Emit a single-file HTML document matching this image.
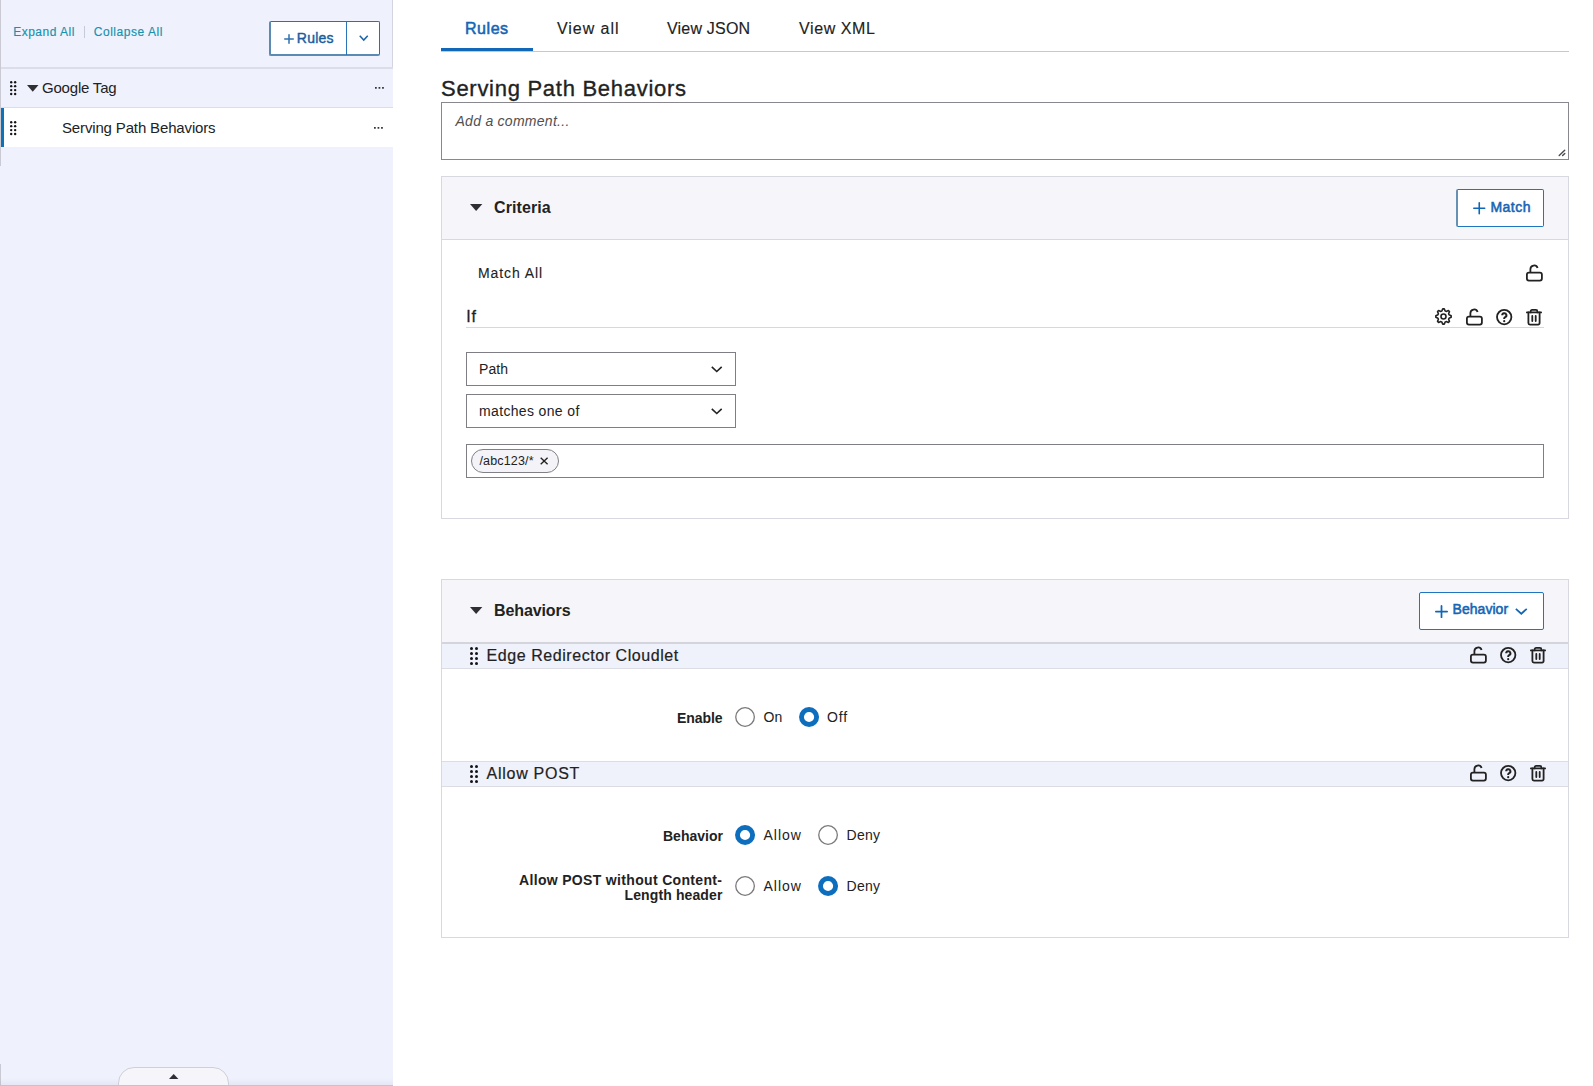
<!DOCTYPE html>
<html><head><meta charset="utf-8">
<style>
*{box-sizing:border-box;margin:0;padding:0}
html,body{width:1594px;height:1086px;overflow:hidden;background:#fff;font-family:"Liberation Sans",sans-serif;color:#222}
.a{position:absolute}
.t{position:absolute;white-space:nowrap;line-height:1}
svg{position:absolute;overflow:visible}
</style></head><body>
<div class="a" style="left:0px;top:0px;width:393px;height:1086px;background:#eff1fd;"></div>
<div class="a" style="left:0px;top:0px;width:1px;height:166px;background:#c9cad3;"></div>
<div class="a" style="left:0px;top:1064px;width:1px;height:22px;background:#c9cad3;"></div>
<div class="a" style="left:392px;top:0px;width:1px;height:68px;background:#d3d4dd;"></div>
<div class="t" style="left:13.20px;top:26.04px;font-size:12px;font-weight:normal;color:#1592ad;letter-spacing:0.5px;font-style:normal;-webkit-text-stroke:0.15px #1592ad">Expand All</div>
<div class="a" style="left:84px;top:26px;width:1px;height:12px;background:#c6c9d6;"></div>
<div class="t" style="left:93.70px;top:26.04px;font-size:12px;font-weight:normal;color:#1592ad;letter-spacing:0.55px;font-style:normal;-webkit-text-stroke:0.15px #1592ad">Collapse All</div>
<div class="a" style="left:268.5px;top:21px;width:111px;height:35px;background:#fff;border-radius:2px;border-top:1.3px solid #1f72bb;border-right:1.3px solid #1f72bb;border-left:2px solid #5b8ab3;border-bottom:2px solid #5b8ab3;"></div>
<div class="a" style="left:346px;top:22px;width:1.3px;height:33px;background:#2a74b8;"></div>
<svg style="left:284px;top:34.2px;" width="10" height="10" viewBox="0 0 10 10"><path d="M5.0 0.75V9.25M0.75 5.0H9.25" stroke="#2f72b0" stroke-width="1.5" stroke-linecap="round"/></svg>
<div class="t" style="left:296.80px;top:30.65px;font-size:14px;font-weight:normal;color:#1a5d9f;letter-spacing:0.25px;font-style:normal;-webkit-text-stroke:0.42px #1a5d9f">Rules</div>
<svg style="left:358.5px;top:35px;" width="9.5" height="5.8" viewBox="0 0 9.5 5.8"><path d="M0.75 0.75L4.75 5.05L8.75 0.75" fill="none" stroke="#1a65a8" stroke-width="1.5"/></svg>
<div class="a" style="left:1px;top:67px;width:392px;height:2px;background:#dcdde8;"></div>
<svg style="left:10.3px;top:80.8px;" width="6.35" height="14.250000000000002" viewBox="0 0 6.35 14.250000000000002"><g fill="#141418"><circle cx="1.20" cy="1.20" r="1.2"/><circle cx="5.15" cy="1.20" r="1.2"/><circle cx="1.20" cy="5.15" r="1.2"/><circle cx="5.15" cy="5.15" r="1.2"/><circle cx="1.20" cy="9.10" r="1.2"/><circle cx="5.15" cy="9.10" r="1.2"/><circle cx="1.20" cy="13.05" r="1.2"/><circle cx="5.15" cy="13.05" r="1.2"/></g></svg>
<svg style="left:26.8px;top:84.8px;" width="11.5" height="6.8" viewBox="0 0 11.5 6.8"><path d="M0 0H11.5L5.75 6.8Z" fill="#2e2e33"/></svg>
<div class="t" style="left:42.00px;top:80.00px;font-size:15px;font-weight:normal;color:#222;letter-spacing:-0.2px;font-style:normal;">Google Tag</div>
<svg style="left:374.7px;top:87px;" width="9.2" height="2.1" viewBox="0 0 9.2 2.1"><g fill="#34343a"><rect x="0" y="0" width="1.75" height="1.75"/><rect x="3.55" y="0" width="1.75" height="1.75"/><rect x="7.1" y="0" width="1.75" height="1.75"/></g></svg>
<div class="a" style="left:1px;top:107px;width:392px;height:1px;background:#dcdde8;"></div>
<div class="a" style="left:4px;top:108px;width:389px;height:39px;background:#fff;"></div>
<div class="a" style="left:1px;top:108px;width:3px;height:39px;background:#0f72b5;"></div>
<svg style="left:10.3px;top:120.8px;" width="6.35" height="14.250000000000002" viewBox="0 0 6.35 14.250000000000002"><g fill="#141418"><circle cx="1.20" cy="1.20" r="1.2"/><circle cx="5.15" cy="1.20" r="1.2"/><circle cx="1.20" cy="5.15" r="1.2"/><circle cx="5.15" cy="5.15" r="1.2"/><circle cx="1.20" cy="9.10" r="1.2"/><circle cx="5.15" cy="9.10" r="1.2"/><circle cx="1.20" cy="13.05" r="1.2"/><circle cx="5.15" cy="13.05" r="1.2"/></g></svg>
<div class="t" style="left:62.00px;top:120.00px;font-size:15px;font-weight:normal;color:#222;letter-spacing:-0.15px;font-style:normal;">Serving Path Behaviors</div>
<svg style="left:373.8px;top:127px;" width="9.2" height="2.1" viewBox="0 0 9.2 2.1"><g fill="#34343a"><rect x="0" y="0" width="1.75" height="1.75"/><rect x="3.55" y="0" width="1.75" height="1.75"/><rect x="7.1" y="0" width="1.75" height="1.75"/></g></svg>
<div class="a" style="left:0px;top:1078px;width:393px;height:7px;background:linear-gradient(rgba(0,0,0,0),rgba(40,40,80,0.05));"></div>
<div class="a" style="left:118px;top:1067px;width:111px;height:25px;background:#f5f5fa;border:1.3px solid #cfcfd7;border-radius:16px 16px 0 0;"></div>
<div class="a" style="left:0px;top:1085px;width:393px;height:1px;background:#c4c4cc;"></div>
<svg style="left:168.7px;top:1073.9px;" width="9.4" height="4.9" viewBox="0 0 9.4 4.9"><path d="M0 4.9H9.4L4.7 0Z" fill="#2e2e33"/></svg>
<div class="a" style="left:1593px;top:0px;width:1px;height:1086px;background:#d0d0d4;"></div>
<div class="t" style="left:465.00px;top:21.06px;font-size:16px;font-weight:normal;color:#1565b4;letter-spacing:0.55px;font-style:normal;-webkit-text-stroke:0.55px #1565b4">Rules</div>
<div class="t" style="left:557.00px;top:21.06px;font-size:16px;font-weight:normal;color:#222;letter-spacing:0.95px;font-style:normal;-webkit-text-stroke:0.15px #222">View all</div>
<div class="t" style="left:667.00px;top:21.06px;font-size:16px;font-weight:normal;color:#222;letter-spacing:0.2px;font-style:normal;-webkit-text-stroke:0.15px #222">View JSON</div>
<div class="t" style="left:799.00px;top:21.06px;font-size:16px;font-weight:normal;color:#222;letter-spacing:0.6px;font-style:normal;-webkit-text-stroke:0.15px #222">View XML</div>
<div class="a" style="left:441px;top:51px;width:1128px;height:1px;background:#c8c8c8;"></div>
<div class="a" style="left:441px;top:48px;width:92px;height:3px;background:#1268b8;"></div>
<div class="t" style="left:441.00px;top:78.38px;font-size:22px;font-weight:normal;color:#222;letter-spacing:0.72px;font-style:normal;-webkit-text-stroke:0.35px #222">Serving Path Behaviors</div>
<div class="a" style="left:441px;top:102px;width:1128px;height:58px;background:#fff;border:1.2px solid #88888e;"></div>
<div class="t" style="left:455.50px;top:113.75px;font-size:14px;font-weight:normal;color:#505050;letter-spacing:0.27px;font-style:italic;">Add a comment...</div>
<svg style="left:1558px;top:149px;" width="8" height="8" viewBox="0 0 8 8"><path d="M1.2 6.6L6.7 1.3M4.6 6.6L6.8 4.4" stroke="#4a4a50" stroke-width="1.4" stroke-linecap="round"/></svg>
<div class="a" style="left:441px;top:176px;width:1128px;height:343px;background:#fff;border:1px solid #d8d8e0;"></div>
<div class="a" style="left:442px;top:177px;width:1126px;height:62px;background:#f6f6fa;"></div>
<div class="a" style="left:442px;top:239px;width:1126px;height:1px;background:#d8d8e0;"></div>
<svg style="left:470px;top:204px;" width="12.3" height="7" viewBox="0 0 12.3 7"><path d="M0 0H12.3L6.15 7Z" fill="#2e2e33"/></svg>
<div class="t" style="left:494.00px;top:199.56px;font-size:16px;font-weight:bold;color:#222;letter-spacing:0.1px;font-style:normal;">Criteria</div>
<div class="a" style="left:1456.3px;top:189px;width:87.7px;height:38px;background:#fff;border-radius:2px;border-top:1.3px solid #1f75c0;border-right:1.3px solid #1f75c0;border-bottom:1.3px solid #1f75c0;border-left:2px solid #6790b5;"></div>
<svg style="left:1473.2px;top:201.8px;" width="12.5" height="12.5" viewBox="0 0 12.5 12.5"><path d="M6.25 0.8V11.7M0.8 6.25H11.7" stroke="#0f66b8" stroke-width="1.6" stroke-linecap="round"/></svg>
<div class="t" style="left:1490.50px;top:199.55px;font-size:14px;font-weight:normal;color:#1565b4;letter-spacing:0.45px;font-style:normal;-webkit-text-stroke:0.55px #1565b4">Match</div>
<div class="t" style="left:478.00px;top:266.15px;font-size:14px;font-weight:normal;color:#222;letter-spacing:0.9px;font-style:normal;-webkit-text-stroke:0.1px #222">Match All</div>
<svg style="left:1525.5px;top:264.5px;" width="17" height="17" viewBox="0 0 17 17"><g fill="none" stroke="#222" stroke-width="1.8"><rect x="0.9" y="7.6" width="15" height="8" rx="2"/><path d="M4.4 7.6V4.3a3.7 3.7 0 0 1 7.2-1.3"/></g></svg>
<div class="t" style="left:466.30px;top:308.76px;font-size:16px;font-weight:normal;color:#222;letter-spacing:0.8px;font-style:normal;-webkit-text-stroke:0.3px #222">If</div>
<div class="a" style="left:466px;top:327px;width:1078px;height:1px;background:#d8d8d8;"></div>
<svg style="left:1435px;top:308.2px;" width="18" height="18" viewBox="0 0 18 18"><g fill="none" stroke="#222" stroke-width="1.6" stroke-linejoin="round"><path d="M16.16 7.75 L16.16 9.25 L14.05 10.18 L13.62 11.23 L14.45 13.38 L13.38 14.45 L11.23 13.62 L10.18 14.05 L9.25 16.16 L7.75 16.16 L6.82 14.05 L5.77 13.62 L3.62 14.45 L2.55 13.38 L3.38 11.23 L2.95 10.18 L0.84 9.25 L0.84 7.75 L2.95 6.82 L3.38 5.77 L2.55 3.62 L3.62 2.55 L5.77 3.38 L6.82 2.95 L7.75 0.84 L9.25 0.84 L10.18 2.95 L11.23 3.38 L13.38 2.55 L14.45 3.62 L13.62 5.77 L14.05 6.82Z"/><circle cx="8.5" cy="8.5" r="2.5"/></g></svg>
<svg style="left:1465.5px;top:308.5px;" width="17" height="17" viewBox="0 0 17 17"><g fill="none" stroke="#222" stroke-width="1.8"><rect x="0.9" y="7.6" width="15" height="8" rx="2"/><path d="M4.4 7.6V4.3a3.7 3.7 0 0 1 7.2-1.3"/></g></svg>
<svg style="left:1495.5px;top:308.5px;" width="17" height="17" viewBox="0 0 17 17"><g fill="none" stroke="#222" stroke-width="1.8"><circle cx="8.2" cy="8.1" r="7.2"/><path d="M6.2 6.3a2.1 2.1 0 1 1 2.9 1.9c-.55.25-.9.6-.9 1.3v.4" stroke-width="2"/></g><circle cx="8.2" cy="12.2" r="1.1" fill="#222"/></svg>
<svg style="left:1525.5px;top:308.5px;" width="17" height="17" viewBox="0 0 17 17"><g fill="none" stroke="#222" stroke-width="1.8" stroke-linejoin="round" stroke-linecap="round"><path d="M0.9 3.4H15.1"/><path d="M4.6 3.4V2.4a1.5 1.5 0 0 1 1.5-1.5H9.9a1.5 1.5 0 0 1 1.5 1.5V3.4"/><path d="M2.4 3.4V14.1a1.5 1.5 0 0 0 1.5 1.5H12.1a1.5 1.5 0 0 0 1.5-1.5V3.4"/><path d="M6.3 7V12M9.7 7V12"/></g></svg>
<div class="a" style="left:466px;top:352px;width:270px;height:34px;background:#fff;border:1.2px solid #7e7e84;"></div>
<div class="t" style="left:479.00px;top:361.75px;font-size:14px;font-weight:normal;color:#222;letter-spacing:0.1px;font-style:normal;">Path</div>
<svg style="left:711px;top:366px;" width="11.5" height="6.3" viewBox="0 0 11.5 6.3"><path d="M0.8 0.8L5.75 5.5L10.7 0.8" fill="none" stroke="#222" stroke-width="1.6"/></svg>
<div class="a" style="left:466px;top:394px;width:270px;height:34px;background:#fff;border:1.2px solid #7e7e84;"></div>
<div class="t" style="left:479.00px;top:403.75px;font-size:14px;font-weight:normal;color:#222;letter-spacing:0.35px;font-style:normal;">matches one of</div>
<svg style="left:711px;top:408px;" width="11.5" height="6.3" viewBox="0 0 11.5 6.3"><path d="M0.8 0.8L5.75 5.5L10.7 0.8" fill="none" stroke="#222" stroke-width="1.6"/></svg>
<div class="a" style="left:466px;top:444px;width:1078px;height:34px;background:#fff;border:1.2px solid #7e7e84;"></div>
<div class="a" style="left:471px;top:449px;width:88px;height:24px;background:#f3f3f8;border:1.1px solid #808086;border-radius:12px;"></div>
<div class="t" style="left:479.50px;top:454.52px;font-size:12.5px;font-weight:normal;color:#222;letter-spacing:0.15px;font-style:normal;">/abc123/*</div>
<svg style="left:540px;top:456.5px;" width="8.3" height="8" viewBox="0 0 8.3 8"><path d="M0.7 0.7L7.6 7.3M7.6 0.7L0.7 7.3" stroke="#222" stroke-width="1.35"/></svg>
<div class="a" style="left:441px;top:579px;width:1128px;height:359px;background:#fff;border:1px solid #d8d8e0;"></div>
<div class="a" style="left:442px;top:580px;width:1126px;height:62px;background:#f6f6fa;"></div>
<div class="a" style="left:442px;top:642px;width:1126px;height:2px;background:#d4d4dc;"></div>
<svg style="left:470px;top:607.3px;" width="12.3" height="7" viewBox="0 0 12.3 7"><path d="M0 0H12.3L6.15 7Z" fill="#2e2e33"/></svg>
<div class="t" style="left:494.00px;top:602.66px;font-size:16px;font-weight:bold;color:#222;letter-spacing:-0.1px;font-style:normal;">Behaviors</div>
<div class="a" style="left:1419px;top:592px;width:125px;height:38px;background:#fff;border:1.3px solid #1f75c0;border-radius:2px;"></div>
<svg style="left:1435.1px;top:604.6px;" width="13" height="13" viewBox="0 0 13 13"><path d="M6.5 0.875V12.125M0.875 6.5H12.125" stroke="#0f66b8" stroke-width="1.75" stroke-linecap="round"/></svg>
<div class="t" style="left:1452.50px;top:602.35px;font-size:14px;font-weight:normal;color:#1565b4;letter-spacing:0.05px;font-style:normal;-webkit-text-stroke:0.55px #1565b4">Behavior</div>
<svg style="left:1514.6px;top:607.6px;" width="12.6" height="6.6" viewBox="0 0 12.6 6.6"><path d="M0.85 0.85L6.3 5.75L11.75 0.85" fill="none" stroke="#1565b4" stroke-width="1.7"/></svg>
<div class="a" style="left:442px;top:644px;width:1126px;height:24px;background:#eff1fb;"></div>
<div class="a" style="left:442px;top:668px;width:1126px;height:1px;background:#dcdce4;"></div>
<svg style="left:470.0px;top:646.9px;" width="8.0" height="18.0" viewBox="0 0 8.0 18.0"><g fill="#141418"><circle cx="1.50" cy="1.50" r="1.5"/><circle cx="6.50" cy="1.50" r="1.5"/><circle cx="1.50" cy="6.50" r="1.5"/><circle cx="6.50" cy="6.50" r="1.5"/><circle cx="1.50" cy="11.50" r="1.5"/><circle cx="6.50" cy="11.50" r="1.5"/><circle cx="1.50" cy="16.50" r="1.5"/><circle cx="6.50" cy="16.50" r="1.5"/></g></svg>
<div class="t" style="left:486.60px;top:648.26px;font-size:16px;font-weight:normal;color:#222;letter-spacing:0.56px;font-style:normal;-webkit-text-stroke:0.2px #222">Edge Redirector Cloudlet</div>
<svg style="left:1469.5px;top:646.6px;" width="17" height="17" viewBox="0 0 17 17"><g fill="none" stroke="#222" stroke-width="1.8"><rect x="0.9" y="7.6" width="15" height="8" rx="2"/><path d="M4.4 7.6V4.3a3.7 3.7 0 0 1 7.2-1.3"/></g></svg>
<svg style="left:1499.5px;top:646.6px;" width="17" height="17" viewBox="0 0 17 17"><g fill="none" stroke="#222" stroke-width="1.8"><circle cx="8.2" cy="8.1" r="7.2"/><path d="M6.2 6.3a2.1 2.1 0 1 1 2.9 1.9c-.55.25-.9.6-.9 1.3v.4" stroke-width="2"/></g><circle cx="8.2" cy="12.2" r="1.1" fill="#222"/></svg>
<svg style="left:1529.5px;top:646.6px;" width="17" height="17" viewBox="0 0 17 17"><g fill="none" stroke="#222" stroke-width="1.8" stroke-linejoin="round" stroke-linecap="round"><path d="M0.9 3.4H15.1"/><path d="M4.6 3.4V2.4a1.5 1.5 0 0 1 1.5-1.5H9.9a1.5 1.5 0 0 1 1.5 1.5V3.4"/><path d="M2.4 3.4V14.1a1.5 1.5 0 0 0 1.5 1.5H12.1a1.5 1.5 0 0 0 1.5-1.5V3.4"/><path d="M6.3 7V12M9.7 7V12"/></g></svg>
<div class="t" style="left:677.00px;top:710.75px;font-size:14px;font-weight:bold;color:#222;letter-spacing:-0.05px;font-style:normal;">Enable</div>
<svg style="left:735px;top:706.5px;" width="20" height="20" viewBox="0 0 20 20"><circle cx="10.05" cy="10" r="9.3" fill="#fff" stroke="#7a7a7a" stroke-width="1.3"/></svg>
<div class="t" style="left:763.50px;top:709.55px;font-size:14px;font-weight:normal;color:#222;letter-spacing:0px;font-style:normal;">On</div>
<svg style="left:799px;top:706.5px;" width="20" height="20" viewBox="0 0 20 20"><circle cx="10.05" cy="10" r="7.55" fill="none" stroke="#0d6ebe" stroke-width="4.9"/></svg>
<div class="t" style="left:827.00px;top:709.55px;font-size:14px;font-weight:normal;color:#222;letter-spacing:0.9px;font-style:normal;">Off</div>
<div class="a" style="left:442px;top:761px;width:1126px;height:1px;background:#dcdce4;"></div>
<div class="a" style="left:442px;top:762px;width:1126px;height:24px;background:#eff1fb;"></div>
<div class="a" style="left:442px;top:786px;width:1126px;height:1px;background:#dcdce4;"></div>
<svg style="left:470.0px;top:764.9px;" width="8.0" height="18.0" viewBox="0 0 8.0 18.0"><g fill="#141418"><circle cx="1.50" cy="1.50" r="1.5"/><circle cx="6.50" cy="1.50" r="1.5"/><circle cx="1.50" cy="6.50" r="1.5"/><circle cx="6.50" cy="6.50" r="1.5"/><circle cx="1.50" cy="11.50" r="1.5"/><circle cx="6.50" cy="11.50" r="1.5"/><circle cx="1.50" cy="16.50" r="1.5"/><circle cx="6.50" cy="16.50" r="1.5"/></g></svg>
<div class="t" style="left:486.60px;top:766.26px;font-size:16px;font-weight:normal;color:#222;letter-spacing:0.72px;font-style:normal;-webkit-text-stroke:0.2px #222">Allow POST</div>
<svg style="left:1469.5px;top:764.6px;" width="17" height="17" viewBox="0 0 17 17"><g fill="none" stroke="#222" stroke-width="1.8"><rect x="0.9" y="7.6" width="15" height="8" rx="2"/><path d="M4.4 7.6V4.3a3.7 3.7 0 0 1 7.2-1.3"/></g></svg>
<svg style="left:1499.5px;top:764.6px;" width="17" height="17" viewBox="0 0 17 17"><g fill="none" stroke="#222" stroke-width="1.8"><circle cx="8.2" cy="8.1" r="7.2"/><path d="M6.2 6.3a2.1 2.1 0 1 1 2.9 1.9c-.55.25-.9.6-.9 1.3v.4" stroke-width="2"/></g><circle cx="8.2" cy="12.2" r="1.1" fill="#222"/></svg>
<svg style="left:1529.5px;top:764.6px;" width="17" height="17" viewBox="0 0 17 17"><g fill="none" stroke="#222" stroke-width="1.8" stroke-linejoin="round" stroke-linecap="round"><path d="M0.9 3.4H15.1"/><path d="M4.6 3.4V2.4a1.5 1.5 0 0 1 1.5-1.5H9.9a1.5 1.5 0 0 1 1.5 1.5V3.4"/><path d="M2.4 3.4V14.1a1.5 1.5 0 0 0 1.5 1.5H12.1a1.5 1.5 0 0 0 1.5-1.5V3.4"/><path d="M6.3 7V12M9.7 7V12"/></g></svg>
<div class="t" style="left:663.00px;top:828.75px;font-size:14px;font-weight:bold;color:#222;letter-spacing:0.0px;font-style:normal;">Behavior</div>
<svg style="left:735px;top:824.8px;" width="20" height="20" viewBox="0 0 20 20"><circle cx="10.05" cy="10" r="7.55" fill="none" stroke="#0d6ebe" stroke-width="4.9"/></svg>
<div class="t" style="left:763.50px;top:827.75px;font-size:14px;font-weight:normal;color:#222;letter-spacing:1.0px;font-style:normal;">Allow</div>
<svg style="left:818px;top:824.8px;" width="20" height="20" viewBox="0 0 20 20"><circle cx="10.05" cy="10" r="9.3" fill="#fff" stroke="#7a7a7a" stroke-width="1.3"/></svg>
<div class="t" style="left:846.50px;top:827.75px;font-size:14px;font-weight:normal;color:#222;letter-spacing:0.3px;font-style:normal;">Deny</div>
<div class="t" style="left:519.00px;top:872.95px;font-size:14px;font-weight:bold;color:#222;letter-spacing:0.33px;font-style:normal;">Allow POST without Content-</div>
<div class="t" style="left:624.50px;top:888.45px;font-size:14px;font-weight:bold;color:#222;letter-spacing:0.12px;font-style:normal;">Length header</div>
<svg style="left:735px;top:875.5px;" width="20" height="20" viewBox="0 0 20 20"><circle cx="10.05" cy="10" r="9.3" fill="#fff" stroke="#7a7a7a" stroke-width="1.3"/></svg>
<div class="t" style="left:763.50px;top:878.55px;font-size:14px;font-weight:normal;color:#222;letter-spacing:1.0px;font-style:normal;">Allow</div>
<svg style="left:818px;top:875.5px;" width="20" height="20" viewBox="0 0 20 20"><circle cx="10.05" cy="10" r="7.55" fill="none" stroke="#0d6ebe" stroke-width="4.9"/></svg>
<div class="t" style="left:846.50px;top:878.55px;font-size:14px;font-weight:normal;color:#222;letter-spacing:0.3px;font-style:normal;">Deny</div>
</body></html>
